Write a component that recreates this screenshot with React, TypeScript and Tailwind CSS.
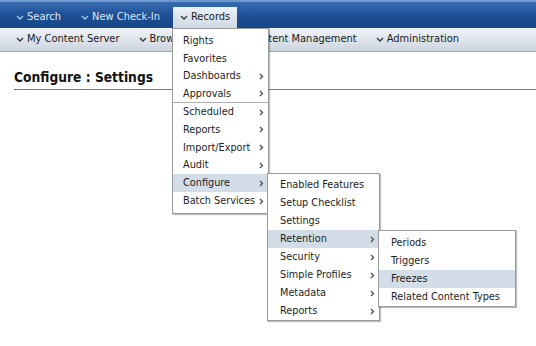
import React from 'react';

const FONT = "font-['DejaVu_Sans_Condensed','DejaVu_Sans',sans-serif]";

const Down = ({ light }: { light?: boolean }) => (
  <svg width="8" height="5" viewBox="0 0 8 5" className="mr-[3px]">
    <path d="M1 1 L4 4 L7 1" fill="none" stroke={light ? '#a9c9ee' : '#3a3a3a'} strokeWidth="1.4" />
  </svg>
);

const Right = () => (
  <svg width="5" height="7" viewBox="0 0 5 7">
    <path d="M1 1 L3.5 3.5 L1 6" fill="none" stroke="#555" strokeWidth="1.4" />
  </svg>
);

type Item = { label: string; sub?: boolean; active?: boolean; sep?: boolean };

const RECORDS: Item[] = [
  { label: 'Rights' },
  { label: 'Favorites' },
  { label: 'Dashboards', sub: true },
  { label: 'Approvals', sub: true, sep: true },
  { label: 'Scheduled', sub: true },
  { label: 'Reports', sub: true },
  { label: 'Import/Export', sub: true },
  { label: 'Audit', sub: true },
  { label: 'Configure', sub: true, active: true },
  { label: 'Batch Services', sub: true },
];

const CONFIGURE: Item[] = [
  { label: 'Enabled Features' },
  { label: 'Setup Checklist' },
  { label: 'Settings' },
  { label: 'Retention', sub: true, active: true },
  { label: 'Security', sub: true },
  { label: 'Simple Profiles', sub: true },
  { label: 'Metadata', sub: true },
  { label: 'Reports', sub: true },
];

const RETENTION: Item[] = [
  { label: 'Periods' },
  { label: 'Triggers' },
  { label: 'Freezes', active: true },
  { label: 'Related Content Types' },
];

const Menu = ({ items, rowH, padL, className }: { items: Item[]; rowH: string; padL: string; className: string }) => (
  <div className={`absolute z-10 bg-white border border-[#9a9a9a] shadow-[1px_1px_1px_rgba(0,0,0,0.25)] ${className}`}>
    {items.map((it, i) => (
      <div
        key={i}
        className={`flex items-center justify-between ${rowH} ${padL} pr-[4px] text-[10.8px] text-[#1e1e1e] ${
          it.active ? 'bg-[#d2dde8]' : ''
        } ${it.sep ? 'border-b border-[#b0b0b0]' : ''}`}
      >
        <span>{it.label}</span>
        {it.sub && <Right />}
      </div>
    ))}
  </div>
);

const App: React.FC = () => {
  return (
    <div className={`relative w-[536px] h-[346px] bg-white overflow-hidden ${FONT}`}>
      {/* top bar */}
      <div className="h-[28px] bg-gradient-to-b from-[#3a6db0] via-[#1d5096] to-[#174686] border-t-2 border-[#6e98cc] flex items-end pl-[16px] text-[11px] text-[#dce9f8]">
        <div className="flex items-center h-[21px]">
          <Down light />
          <span>Search</span>
        </div>
        <div className="flex items-center h-[21px] ml-[20px]">
          <Down light />
          <span>New Check-In</span>
        </div>
        <div className="flex items-center h-[21px] ml-[13px] px-[7px] bg-gradient-to-b from-[#eef2f7] to-[#cdd8e5] text-[#1a1a1a]">
          <Down />
          <span>Records</span>
        </div>
      </div>

      {/* second bar */}
      <div className="h-[24px] bg-gradient-to-b from-[#f1f4f8] to-[#ccd5df] border-b border-[#9ea8b4] flex items-center pl-[16px] text-[11px] text-[#1a1a1a]">
        <div className="flex items-center">
          <Down />
          <span>My Content Server</span>
        </div>
        <div className="flex items-center ml-[19px]">
          <Down />
          <span>Browse Content</span>
        </div>
        <div className="flex items-center ml-[10px]">
          <Down />
          <span>Content Management</span>
        </div>
        <div className="flex items-center ml-[19px]">
          <Down />
          <span>Administration</span>
        </div>
      </div>

      {/* heading */}
      <div className="pl-[14px] mt-[15px]">
        <div className="text-[13.7px] font-bold text-[#111] pb-[1px] border-b border-[#5d7da6]">Configure : Settings</div>
      </div>

      <Menu items={RECORDS} rowH="h-[17.8px]" padL="pl-[10px]" className="left-[172px] top-[28px] w-[97px] pt-[3px] pb-[3px]" />
      <Menu items={CONFIGURE} rowH="h-[18px]" padL="pl-[12px]" className="left-[267px] top-[173px] w-[113px] pt-[2px]" />
      <Menu items={RETENTION} rowH="h-[18px]" padL="pl-[12px]" className="left-[378px] top-[230px] w-[138px] pt-[3px]" />
    </div>
  );
};

export default App;
